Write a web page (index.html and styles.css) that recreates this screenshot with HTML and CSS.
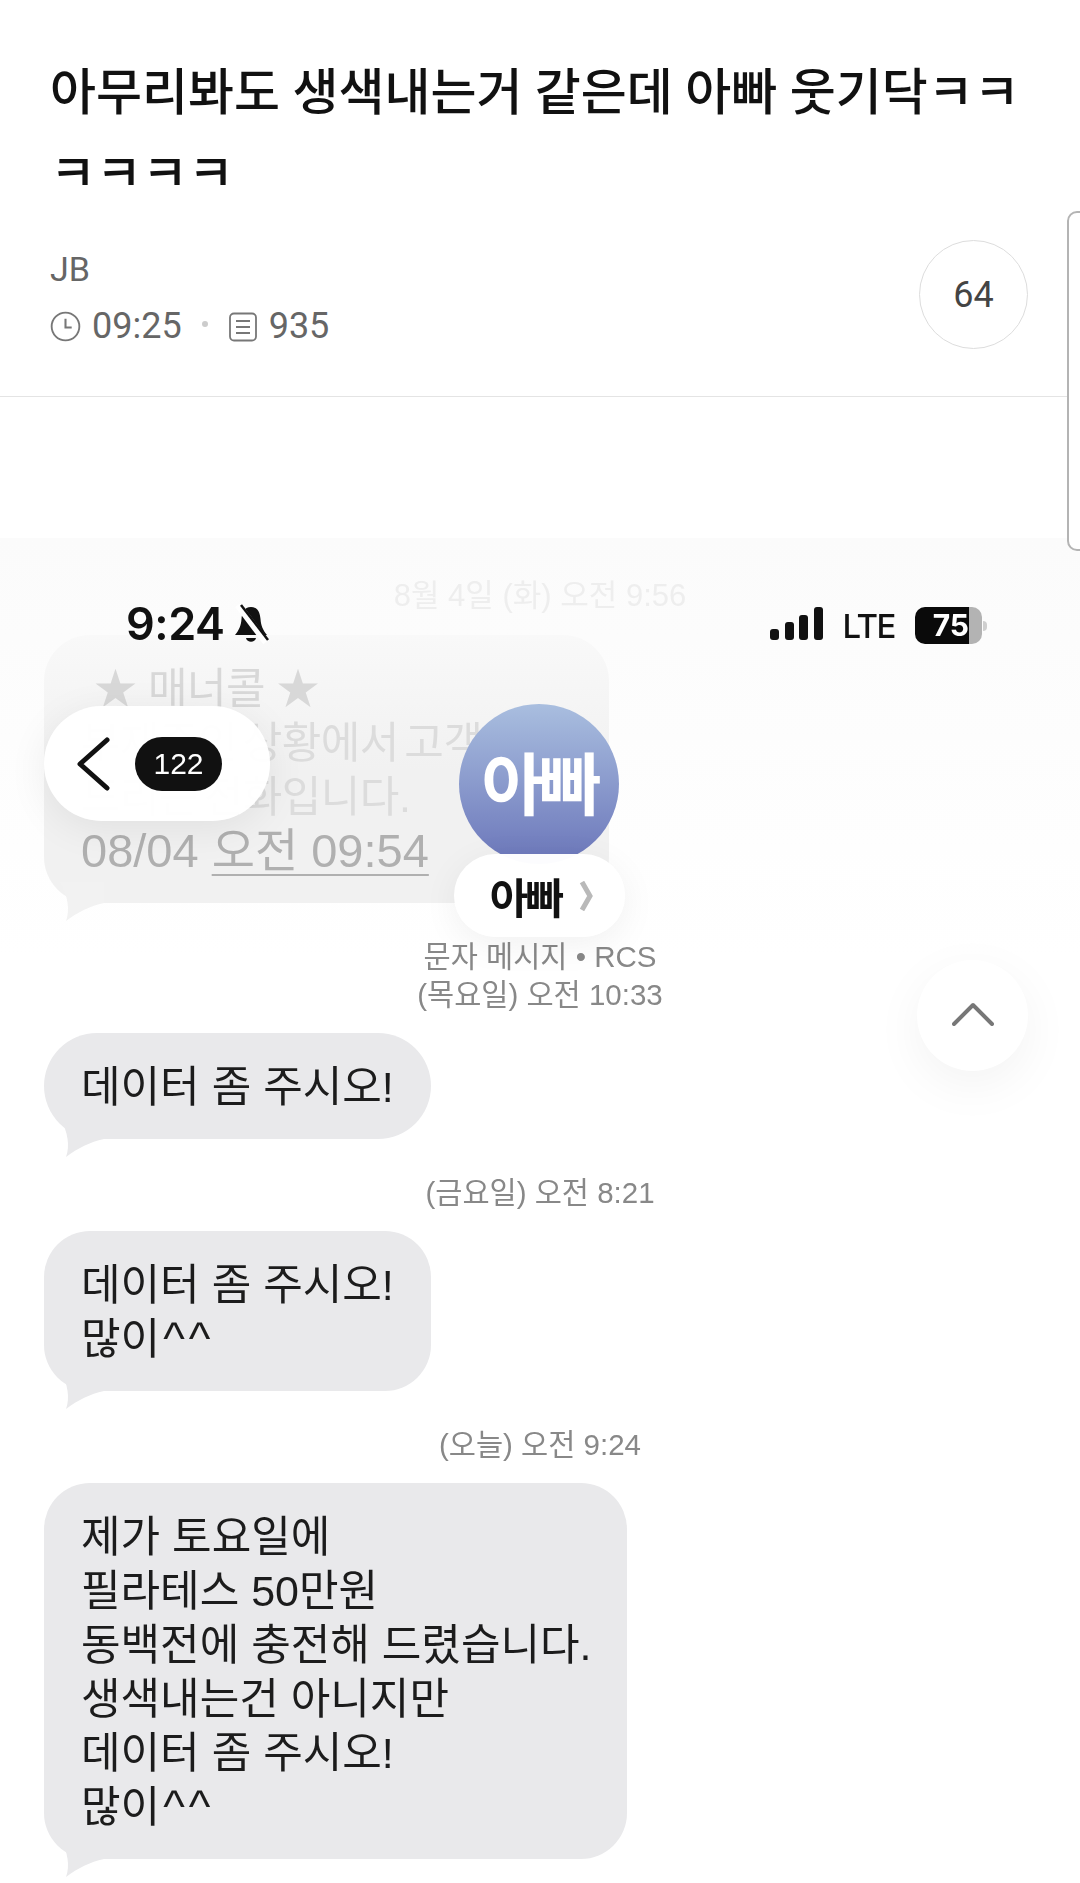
FILE: index.html
```html
<!DOCTYPE html>
<html lang="ko">
<head>
  <meta charset="UTF-8">
  <meta name="viewport" content="width=device-width, initial-scale=1.0">
  <title>아무리봐도 생색내는거 같은데 아빠 웃기닥ㅋㅋㅋㅋㅋㅋ</title>
  <link rel="stylesheet" href="styles.css">
</head>
<body>
  <header class="post-head">
    <h1>아무리봐도 생색내는거 같은데 아빠 웃기닥ㅋㅋ<br>ㅋㅋㅋㅋ</h1>
    <div class="post-meta">
      <div class="post-info">
        <div class="author">JB</div>
        <div class="stats">
          <svg class="icon" viewBox="0 0 30 30"><circle cx="15" cy="15" r="13.4" fill="none" stroke="#777" stroke-width="1.8"/><path d="M15 7.5V16H21" fill="none" stroke="#777" stroke-width="2"/></svg>
          <span>09:25</span>
          <i class="dot"></i>
          <svg class="icon icon-doc" viewBox="0 0 30 30"><rect x="2" y="1.5" width="26" height="27" rx="4" fill="none" stroke="#777" stroke-width="1.8"/><path d="M8 9H22M8 15H22M8 21H22" stroke="#777" stroke-width="2"/></svg>
          <span>935</span>
        </div>
      </div>
      <div class="comments">64</div>
    </div>
  </header>

  <div class="side-tab"></div>

  <main class="shot">
    <div class="thread">
      <p class="stamp stamp-faded">8월 4일 (화) 오전 9:56</p>
      <div class="bubble bubble-faded">
        <p class="faded-line">★ 매너콜 ★</p>
        <p class="faded-line">부재중인 상황에서 고객님</p>
        <p class="faded-line">드리는 전화입니다.</p>
        <p class="faded-time">08/04 <u>오전 09:54</u></p>
      </div>

      <p class="stamp">문자 메시지 • RCS<br>(목요일) 오전 10:33</p>
      <div class="bubble bubble-short">데이터 좀 주시오!</div>

      <p class="stamp">(금요일) 오전 8:21</p>
      <div class="bubble bubble-short">데이터 좀 주시오!<br>많이<span class="carets">^^</span></div>

      <p class="stamp">(오늘) 오전 9:24</p>
      <div class="bubble bubble-long">제가 토요일에<br>필라테스 50만원<br>동백전에 충전해 드렸습니다.<br>생색내는건 아니지만<br>데이터 좀 주시오!<br>많이<span class="carets">^^</span></div>
    </div>

    <div class="status-bar">
      <div class="status-left">
        <span class="clock">9:24</span>
        <svg class="bell" viewBox="0 0 36 40">
          <path d="M18 3C11 3 9 9 8.500 15C8 22 6 26 2 31H34C30 26 28 22 27.500 15C27 9 25 3 18 3Z" fill="#111"/>
          <path d="M13 34C14 39 22 39 23 34Z" fill="#111"/>
          <path d="M5 1L33 38" stroke="#fff" stroke-width="7"/>
          <path d="M8 1L35 36" stroke="#111" stroke-width="2.500"/>
        </svg>
      </div>
      <div class="status-right">
        <svg class="signal" viewBox="0 0 53 34">
          <rect x="0" y="22" width="9" height="11" rx="3" fill="#111"/>
          <rect x="15" y="15" width="9" height="18" rx="3" fill="#111"/>
          <rect x="29" y="8" width="9" height="25" rx="3" fill="#111"/>
          <rect x="44" y="0" width="9" height="33" rx="3" fill="#111"/>
        </svg>
        <span class="network">LTE</span>
        <div class="battery">
          <span class="battery-level">75</span>
          <span class="battery-rest"></span>
          <span class="battery-cap"></span>
        </div>
      </div>
    </div>

    <div class="back-pill">
      <svg class="back-arrow" viewBox="0 0 34 54"><path d="M31 3L4 27L31 51" fill="none" stroke="#111" stroke-width="5" stroke-linecap="round" stroke-linejoin="round"/></svg>
      <span class="back-count">122</span>
    </div>

    <div class="avatar">아빠</div>
    <div class="name-pill">
      <span>아빠</span>
      <svg class="name-arrow" viewBox="0 0 14 30"><path d="M3 1L11 15L3 29" fill="none" stroke="#b9b9b9" stroke-width="5"/></svg>
    </div>

    <div class="to-top">
      <svg class="to-top-arrow" viewBox="0 0 42 24"><path d="M2 22L21 3L40 22" fill="none" stroke="#777" stroke-width="4" stroke-linecap="round" stroke-linejoin="round"/></svg>
    </div>
  </main>
</body>
</html>
```

FILE: styles.css
```css
* {
  margin: 0;
  padding: 0;
  box-sizing: border-box;
}

html, body {
  height: 1883px;
  overflow: hidden;
}

body {
  font-family: Roboto, "Noto Sans CJK KR", sans-serif;
  background: #fff;
  color: #111;
  position: relative;
}

/* post header */
.post-head {
  padding: 53px 52px 42px 50px;
  border-bottom: 1.5px solid #e4e4e4;
}

h1 {
  font-size: 50px;
  font-weight: 500;
  line-height: 81px;
  color: #111;
  white-space: nowrap;
}

.post-meta {
  display: flex;
  justify-content: space-between;
  align-items: flex-start;
  margin-top: 25px;
}

.author {
  font-size: 34px;
  line-height: 58px;
  color: #666;
}

.stats {
  display: flex;
  align-items: center;
  margin-top: 1px;
  font-size: 36px;
  line-height: 55px;
  color: #666;
}

.icon {
  width: 31px;
  height: 31px;
  margin: 0 11px 0 0;
}

.icon-doc {
  width: 30px;
  height: 30px;
}

.dot {
  width: 6px;
  height: 6px;
  margin: -6px 20px 0 20px;
  border-radius: 50%;
  background: #ccc;
}

.comments {
  width: 109px;
  height: 109px;
  border: 1.5px solid #ddd;
  border-radius: 50%;
  display: flex;
  align-items: center;
  justify-content: center;
  font-size: 36px;
  color: #444;
}

.side-tab {
  position: absolute;
  top: 211px;
  left: 1067px;
  width: 30px;
  height: 340px;
  background: #fff;
  border: 2px solid #b4b4b4;
  border-radius: 10px;
  z-index: 2;
}

/* message screenshot */
.shot {
  position: relative;
  margin-top: 141px;
  height: 1345px;
  background: linear-gradient(#fbfbfb, #fdfdfd 200px, #fff 420px);
  font-family: "Liberation Sans", "Noto Sans CJK KR", sans-serif;
  filter: blur(0.5px);
}

.thread {
  display: flex;
  flex-direction: column;
  padding: 39px 0 0 44px;
}

.stamp {
  width: 992px;
  text-align: center;
  font-size: 29.500px;
  line-height: 38px;
  color: #888;
  margin: 35px 0 19px;
}

.stamp-faded {
  margin: 0 0 20px;
  font-size: 31px;
  color: #eee;
}

.bubble {
  position: relative;
  background: #e9e9eb;
  padding: 27px 30px 25px 37px;
  font-size: 43px;
  line-height: 54px;
  color: #1c1c1c;
}

.bubble::after {
  content: "";
  position: absolute;
  left: 10px;
  bottom: -19px;
  width: 50px;
  height: 40px;
  background: #e9e9eb;
  clip-path: path("M6 0 C 14 14, 16 28, 12 39 C 24 30, 36 24, 50 21 L 50 0 Z");
}

.carets {
  font-size: 46px;
  line-height: 0;
  letter-spacing: 4px;
  margin-left: 3px;
}

.bubble-short {
  width: 387px;
  border-radius: 54px;
}

.bubble-short + .stamp + .bubble-short {
  border-radius: 46px;
}

.bubble-long {
  width: 583px;
  border-radius: 46px;
}

.bubble-faded {
  width: 565px;
  border-radius: 46px;
  background: linear-gradient(#f9f9f9, #f1f1f1 50%, #f1f1f1);
}

.bubble-faded::after {
  background: #f2f2f2;
}

.faded-line {
  color: #dcdcdc;
  font-size: 43px;
  letter-spacing: -0.5px;
  word-spacing: -6px;
  white-space: nowrap;
}

.faded-line:first-child {
  color: #d8d8d8;
  margin-left: 13px;
  word-spacing: 0;
}

.faded-time {
  color: #b0b0b0;
  font-size: 47px;
  white-space: nowrap;
}

.faded-time u {
  text-decoration-thickness: 1.5px;
  text-underline-offset: 7px;
}

/* pieces that lie over the thread */
.status-bar {
  position: absolute;
  top: 62px;
  left: 126px;
  width: 861px;
  display: flex;
  justify-content: space-between;
  align-items: center;
}

.status-left, .status-right {
  display: flex;
  align-items: center;
}

.status-left {
  margin-top: -4px;
}

.clock {
  font-family: Inter, "Liberation Sans", sans-serif;
  font-size: 45px;
  font-weight: 600;
  letter-spacing: -0.5px;
  color: #111;
}

.bell {
  width: 36px;
  height: 40px;
  margin-left: 9px;
}

.signal {
  width: 53px;
  height: 34px;
  margin-top: -3px;
}

.network {
  font-family: Inter, "Liberation Sans", sans-serif;
  font-size: 33px;
  font-weight: 500;
  line-height: 36px;
  letter-spacing: -1.5px;
  margin: 0 20px 0 20px;
  color: #111;
}

.battery {
  display: flex;
  align-items: center;
  width: 72px;
  height: 37px;
}

.battery-level {
  width: 54px;
  height: 37px;
  background: #0a0a0a;
  border-radius: 10px 0 0 10px;
  color: #fff;
  font-family: Inter, "Liberation Sans", sans-serif;
  font-size: 30px;
  font-weight: 700;
  line-height: 37px;
  text-align: right;
}

.battery-rest {
  width: 13px;
  height: 37px;
  background: #b3b3b3;
  border-radius: 0 10px 10px 0;
}

.battery-cap {
  width: 4px;
  height: 10px;
  margin-left: 1px;
  background: #cfcfcf;
  border-radius: 0 4px 4px 0;
}

.back-pill {
  position: absolute;
  top: 168px;
  left: 44px;
  width: 226px;
  height: 115px;
  padding-left: 32px;
  display: flex;
  align-items: center;
  gap: 25px;
  background: rgba(255, 255, 255, 0.97);
  border-radius: 58px;
  box-shadow: 0 8px 40px rgba(0, 0, 0, 0.07);
}

.back-arrow {
  width: 34px;
  height: 54px;
}

.back-count {
  width: 87px;
  height: 54px;
  border-radius: 27px;
  background: #111;
  color: #fff;
  font-size: 30px;
  line-height: 54px;
  text-align: center;
}

.avatar {
  position: absolute;
  top: 166px;
  left: 459px;
  width: 160px;
  height: 160px;
  border-radius: 50%;
  padding-bottom: 8px;
  background: linear-gradient(#a9bedf, #6b76ba);
  color: #fff;
  display: flex;
  align-items: center;
  justify-content: center;
  font-family: "Noto Sans CJK KR", sans-serif;
  font-size: 68px;
  font-weight: 700;
  letter-spacing: -5px;
}

.name-pill {
  position: absolute;
  top: 316px;
  left: 454px;
  width: 171px;
  height: 83px;
  display: flex;
  align-items: center;
  justify-content: center;
  gap: 18px;
  padding-left: 4px;
  background: rgba(255, 255, 255, 0.98);
  border-radius: 42px;
  box-shadow: 0 8px 36px rgba(0, 0, 0, 0.06);
  font-family: "Noto Sans CJK KR", sans-serif;
  font-size: 42px;
  font-weight: 700;
  letter-spacing: -3px;
  color: #111;
}

.name-arrow {
  width: 14px;
  height: 30px;
}

.to-top {
  position: absolute;
  top: 422px;
  left: 917px;
  width: 111px;
  height: 111px;
  border-radius: 50%;
  background: #fff;
  display: flex;
  align-items: center;
  justify-content: center;
  box-shadow: 0 14px 50px rgba(0, 0, 0, 0.05);
}

.to-top-arrow {
  width: 42px;
  height: 24px;
  margin-bottom: 4px;
}
```
